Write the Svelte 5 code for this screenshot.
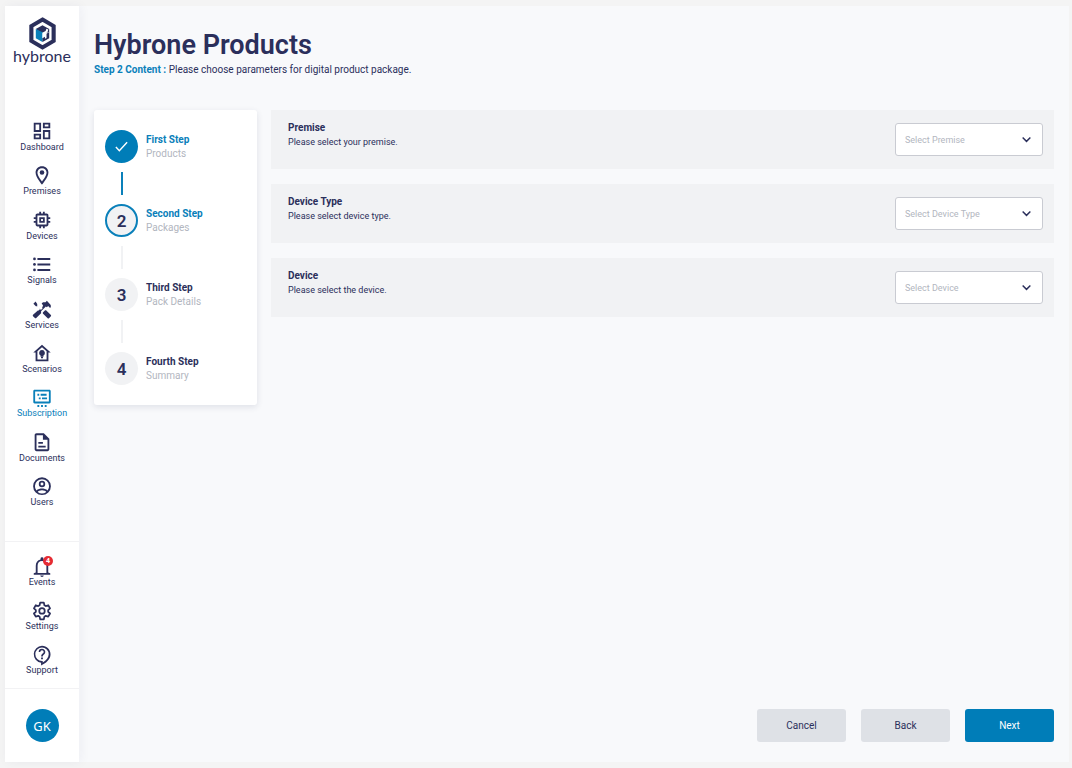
<script>
    let active = "Subscription";
    let current = 2;

    const menu = ["Dashboard", "Premises", "Devices", "Signals", "Services", "Scenarios", "Subscription", "Documents", "Users"];
    const tools = ["Events", "Settings", "Support"];

    const steps = [
        { title: "First Step", text: "Products" },
        { title: "Second Step", text: "Packages" },
        { title: "Third Step", text: "Pack Details" },
        { title: "Fourth Step", text: "Summary" }
    ];

    let fields = [
        { id: "premise", title: "Premise", text: "Please select your premise.", placeholder: "Select Premise", value: "" },
        { id: "deviceType", title: "Device Type", text: "Please select device type.", placeholder: "Select Device Type", value: "" },
        { id: "device", title: "Device", text: "Please select the device.", placeholder: "Select Device", value: "" }
    ];
</script>

{#snippet icon(name)}
    <svg class="icon" viewBox="0 0 24 24" aria-hidden="true">
        {#if name == "Dashboard"}
            <path d="M19 5v2h-4V5h4M9 5v6H5V5h4m10 8v6h-4v-6h4M9 17v2H5v-2h4M21 3h-8v6h8V3zM11 3H3v10h8V3zm10 8h-8v10h8V11zm-10 4H3v6h8v-6z" />
        {:else if name == "Premises"}
            <path d="M12 2.500C8 2.500 5 5.500 5 9.300 5 14.500 12 22.500 12 22.500s7-8 7-13.200C19 5.500 16 2.500 12 2.500zm0 2c2.900 0 5 2.200 5 4.900 0 3-3.200 7.500-5 9.800-1.800-2.300-5-6.800-5-9.800 0-2.700 2.100-4.900 5-4.900z" />
            <circle cx="12" cy="9.300" r="2.500" />
        {:else if name == "Devices"}
            <path d="M15 9H9v6h6V9zm-2 4h-2v-2h2v2zm8-2V9h-2V7c0-1.100-.9-2-2-2h-2V3h-2v2h-2V3H9v2H7c-1.100 0-2 .9-2 2v2H3v2h2v2H3v2h2v2c0 1.100.9 2 2 2h2v2h2v-2h2v2h2v-2h2c1.100 0 2-.9 2-2v-2h2v-2h-2v-2h2zm-4 6H7V7h10v10z" />
        {:else if name == "Signals"}
            <path d="M7 5.500h14v2H7zM7 11.500h14v2H7zM7 17.500h14v2H7z" />
            <circle cx="3.800" cy="6.500" r="1.500" />
            <circle cx="3.800" cy="12.500" r="1.500" />
            <circle cx="3.800" cy="18.500" r="1.500" />
        {:else if name == "Services"}
            <path d="M21.700 18.600l-5.300-5.300h-1l-2.500 2.500v1l5.300 5.300c.4.400 1 .4 1.400 0l2.100-2.100c.4-.4.400-1 0-1.400z" />
            <path d="M17.300 10.200l1.400-1.400 2.100 2.100c1.200-1.200 1.200-3.100 0-4.200l-3.500-3.600-1.400 1.400h-2.800l-1.500 1.500.7.700 1 1.900-1.400 1.400 1 1-2 2-4.100-4.100V6.500L5 3.800 2.600 6.200l2.700 2.700h1.400l3.200 3.200-1.500 1.500H7.500l-5.300 4.800c-.4.400-.4 1 0 1.400l2.100 2.100c.4.400 1 .4 1.400 0l5.300-5.300v-2.100l5.200-5.200 1.100.9z" />
        {:else if name == "Scenarios"}
            <path d="M12 3L2.500 11.500H5V21h14v-9.500h2.500L12 3zm0 2.600l5 4.500V19H7v-8.900l5-4.500z" />
            <path d="M12 8.800a3.100 3.100 0 0 0-1.600 5.800V16h3.200v-1.400A3.100 3.100 0 0 0 12 8.800zM10.900 16.300h2.200v1.400h-2.200z" />
        {:else if name == "Subscription"}
            <path d="M4 4c-1 0-1.500.6-1.500 1.500v12c0 .9.500 1.500 1.500 1.500h16c.9 0 1.500-.6 1.500-1.500v-12c0-.9-.6-1.500-1.500-1.500H4zm.5 2h15v11h-15V6z" />
            <path d="M7 8.500h2v2H7zM10.500 8.500H17v2h-6.500zM8.500 12.500h2v2h-2zM12 12.500h5.500v2H12zM7 20.800h2v2H7zM11 20.800h2v2h-2zM15 20.800h2v2h-2z" />
        {:else if name == "Documents"}
            <path d="M8 16h8v2H8zm0-4h5v2H8zm6-9.500H6c-1.100 0-2 .9-2 2v15.500c0 1.100.9 2 2 2h12c1.100 0 2-.9 2-2V8.500l-6-6zM18 20H6V4.500h7v5h5V20z" />
        {:else if name == "Users"}
            <path d="M12 2.500a9.700 9.700 0 1 0 0 19.400 9.700 9.700 0 0 0 0-19.400zM7.300 18.500c.4-.9 2.800-1.800 4.700-1.800s4.300.9 4.700 1.800a7.700 7.700 0 0 1-9.400 0zm10.800-1.500c-1.300-1.700-4.500-2.200-6.100-2.200s-4.700.5-6.100 2.200a7.700 7.700 0 1 1 12.200 0z" />
            <path d="M12 6.300a3.500 3.500 0 1 0 0 7 3.500 3.500 0 0 0 0-7zm0 5.100a1.600 1.600 0 1 1 0-3.200 1.600 1.600 0 0 1 0 3.200z" />
        {:else if name == "Events"}
            <path d="M12 24c1.100 0 1.900-.7 1.900-1.600h-3.800c0 .9.800 1.600 1.900 1.600zM18.800 19v-7.300c0-3.600-1.900-6.200-5.200-6.900V4.100a1.600 1.600 0 0 0-3.200 0v.7c-3.300.7-5.200 3.300-5.200 6.900V19L3 20v1.500h18V20l-2.200-1zm-2 .5H7.200v-7.800c0-3 1.800-5.100 4.800-5.100s4.800 2.100 4.800 5.100v7.800z" />
        {:else if name == "Settings"}
            <g fill="none" stroke="currentColor" stroke-width="1.900" stroke-linejoin="round">
                <path d="M10 4h4l.6 2.800 1.500.9 2.700-.9 2 3.500-2.100 1.900v1.700l2.100 1.900-2 3.500-2.700-.9-1.500.9-.6 2.800h-4l-.6-2.800-1.500-.9-2.700.9-2-3.500 2.100-1.900v-1.700l-2.100-1.900 2-3.500 2.700.9 1.500-.9z" />
                <circle cx="12" cy="13" r="3" />
            </g>
        {:else if name == "Support"}
            <path d="M12 3a9.300 9.300 0 0 0-1 18.500v3c5-2.100 10.300-6.400 10.300-12.200C21.300 7.100 17.200 3 12 3zm.8 18.200v-1.600H12a7.300 7.300 0 1 1 7.300-7.300c0 3.400-2.500 6.700-6.500 8.900z" />
            <path d="M11 15.900h2v1.900h-2zM12 6.200a3.600 3.600 0 0 0-3.600 3.600h1.800c0-1 .8-1.800 1.800-1.800s1.800.8 1.800 1.800c0 1.800-2.700 1.600-2.700 4.900h1.800c0-2.100 2.700-2.400 2.700-4.900 0-2-1.600-3.600-3.600-3.600z" />
        {/if}
    </svg>
{/snippet}

<div class="page">
    <aside class="sidebar">
        <a class="logo" href="#home">
            <svg class="mark" viewBox="0 0 28 32" aria-hidden="true">
                <path class="hex" d="M14 2.500L24.800 8.800v14.400L14 29.500 3.200 23.200V8.800z" />
                <path class="dark" d="M7.500 11.600L14 8l6.500 3.600v3l-6.500 2z" />
                <path class="blue" d="M7.500 11.600l7 3.400-.5 9.200-6.500-3.700z" />
                <path class="white" d="M13.800 15.200l3.200-1.700.8-2.200 1.800.9-.8 2.600-2.500 1.600-.5 2.500-2 1.600z" />
                <path class="dark" d="M20.500 14.500v6L14 24.200v-3.700l2.400-1.300v2l1.500-.9v-4.100z" />
            </svg>
            <span>hybrone</span>
        </a>

        <nav class="menu">
            {#each menu as name}
                <a class="item" class:active={name == active} href="#{name}" on:click={() => active = name}>
                    {@render icon(name)}
                    <span>{name}</span>
                </a>
            {/each}
        </nav>

        <nav class="tools">
            {#each tools as name}
                <a class="item" class:active={name == active} href="#{name}" on:click={() => active = name}>
                    {@render icon(name)}
                    {#if name == "Events"}
                        <b class="badge">4</b>
                    {/if}
                    <span>{name}</span>
                </a>
            {/each}
        </nav>

        <div class="account">
            <button class="avatar">GK</button>
        </div>
    </aside>

    <main class="content">
        <h1>Hybrone Products</h1>
        <p class="intro"><b>Step {current} Content :</b> Please choose parameters for digital product package.</p>

        <div class="columns">
            <ol class="steps">
                {#each steps as step, i}
                    <li class="step" class:done={i + 1 < current} class:current={i + 1 == current}>
                        <div class="circle">
                            {#if i + 1 < current}
                                <svg class="check" viewBox="0 0 16 16" aria-hidden="true"><path d="M2 8.500l3.700 4L14 3.500" /></svg>
                            {:else}
                                {i + 1}
                            {/if}
                        </div>
                        <div class="stepText">
                            <b>{step.title}</b>
                            <span>{step.text}</span>
                        </div>
                    </li>
                {/each}
            </ol>

            <form class="fields">
                {#each fields as field}
                    <div class="field">
                        <label for={field.id}>
                            <b>{field.title}</b>
                            <span>{field.text}</span>
                        </label>
                        <div class="selectBox">
                            <select id={field.id} bind:value={field.value}>
                                <option value="">{field.placeholder}</option>
                            </select>
                            <svg class="arrow" viewBox="0 0 10 10" aria-hidden="true"><path d="M1.500 3.200L5 6.700l3.500-3.500" /></svg>
                        </div>
                    </div>
                {/each}
            </form>
        </div>

        <div class="buttons">
            <button>Cancel</button>
            <button>Back</button>
            <button class="next">Next</button>
        </div>
    </main>
</div>

<style>
    :global(body) {
        background-color: #f4f4f4;
    }

    .page {
        min-height: 100vh;
        box-sizing: border-box;
        padding: 6px 3px 6px 5px;
        display: flex;
        font-family: Roboto, sans-serif;
        font-size: 10px;
        line-height: 14px;
        color: #2b2f5b;
    }

    a {
        color: inherit;
        text-decoration: none;
    }

    button {
        border: none;
        padding: 0;
        font-family: inherit;
        cursor: pointer;
    }

    .sidebar {
        flex: none;
        width: 74px;
        display: flex;
        flex-direction: column;
        background-color: white;
        box-shadow: 2px 0 10px rgba(43, 47, 91, 0.05);
        z-index: 1;
    }

    .logo {
        padding-top: 11px;
        margin-bottom: 59px;
        display: flex;
        flex-direction: column;
        align-items: center;
        font-family: Lato, sans-serif;
        font-size: 16px;
        line-height: 12px;
    }

    .mark {
        width: 29px;
        height: 33px;
    }

    .hex {
        fill: white;
        stroke: #2b2f5b;
        stroke-width: 4;
    }

    .dark {
        fill: #2b2f5b;
    }

    .blue {
        fill: #0a80ba;
    }

    .white {
        fill: white;
    }

    .menu {
        flex: none;
        min-height: 387px;
        display: flex;
        flex-direction: column;
        justify-content: space-between;
    }

    .tools {
        margin-top: auto;
        padding: 14px 0 12px;
        display: flex;
        flex-direction: column;
        gap: 12px;
        border-top: 1px solid #f2f2f4;
    }

    .item {
        position: relative;
        display: flex;
        flex-direction: column;
        align-items: center;
        font-size: 9px;
        line-height: 12px;
    }

    .item.active {
        color: #0a80ba;
    }

    .icon {
        width: 22px;
        height: 22px;
        margin: -1px 0;
        fill: currentColor;
        overflow: visible;
    }

    .badge {
        position: absolute;
        top: 0;
        left: 38px;
        width: 10px;
        height: 10px;
        border-radius: 50%;
        background-color: #e52b33;
        color: white;
        font-size: 7px;
        line-height: 10px;
        text-align: center;
    }

    .account {
        padding: 20px 0;
        display: flex;
        justify-content: center;
        border-top: 1px solid #f2f2f4;
    }

    .avatar {
        width: 33px;
        height: 33px;
        border-radius: 50%;
        background-color: #007db8;
        color: white;
        font-family: "Noto Sans", sans-serif;
        font-size: 13px;
    }

    .content {
        flex: 1;
        padding: 22px 15px 20px;
        display: flex;
        flex-direction: column;
        background-color: #f8f9fb;
    }

    h1 {
        margin: 0;
        font-size: 27px;
        line-height: 35px;
        font-weight: 600;
    }

    .intro {
        margin: 0 0 33px;
    }

    .intro b {
        color: #0a80ba;
    }

    .columns {
        display: flex;
        align-items: flex-start;
        gap: 14px;
    }

    .steps {
        flex: none;
        width: 163px;
        box-sizing: border-box;
        margin: 0;
        padding: 20px 11px;
        display: flex;
        flex-direction: column;
        gap: 41px;
        list-style: none;
        background-color: white;
        border-radius: 3px;
        box-shadow: 0 2px 6px rgba(43, 47, 91, 0.12);
    }

    .step {
        position: relative;
        display: flex;
        align-items: center;
        gap: 8px;
    }

    .step:not(:last-child)::after {
        content: "";
        position: absolute;
        top: 42px;
        left: 16px;
        width: 2px;
        height: 23px;
        background-color: #f1f2f4;
    }

    .step.done::after {
        background-color: #0a80ba;
    }

    .circle {
        width: 33px;
        height: 33px;
        box-sizing: border-box;
        display: flex;
        justify-content: center;
        align-items: center;
        border-radius: 50%;
        background-color: #f1f2f4;
        font-size: 17px;
        font-weight: 600;
    }

    .done .circle {
        background-color: #007db8;
    }

    .current .circle {
        border: 2px solid #0a80ba;
    }

    .check {
        width: 15px;
        height: 15px;
        fill: none;
        stroke: white;
        stroke-width: 1.500;
    }

    .stepText,
    label {
        display: flex;
        flex-direction: column;
    }

    .stepText span {
        color: #b2b6c0;
    }

    .done b,
    .current b {
        color: #0a80ba;
    }

    .fields {
        flex: 1;
        display: flex;
        flex-direction: column;
        gap: 15px;
    }

    .field {
        padding: 13px 11px 13px 17px;
        display: flex;
        justify-content: space-between;
        align-items: flex-start;
        background-color: #f1f2f4;
    }

    label {
        margin-top: -2px;
    }

    label span {
        font-size: 9px;
    }

    .selectBox {
        position: relative;
        width: 148px;
    }

    select {
        display: block;
        width: 100%;
        height: 33px;
        padding: 0 9px;
        appearance: none;
        border: 1px solid #c9cbd2;
        border-radius: 3px;
        background-color: white;
        color: #b2b6c0;
        font-family: inherit;
        font-size: 9px;
    }

    .arrow {
        position: absolute;
        top: 11px;
        right: 11px;
        width: 11px;
        height: 11px;
        fill: none;
        stroke: #2b2f5b;
        stroke-width: 1.300;
        pointer-events: none;
    }

    .buttons {
        margin-top: auto;
        display: flex;
        justify-content: flex-end;
        gap: 15px;
    }

    .buttons button {
        width: 89px;
        height: 33px;
        border-radius: 3px;
        background-color: #dee1e6;
        color: #2b2f5b;
        font-size: 10px;
    }

    .buttons .next {
        background-color: #007db8;
        color: white;
    }
</style>
